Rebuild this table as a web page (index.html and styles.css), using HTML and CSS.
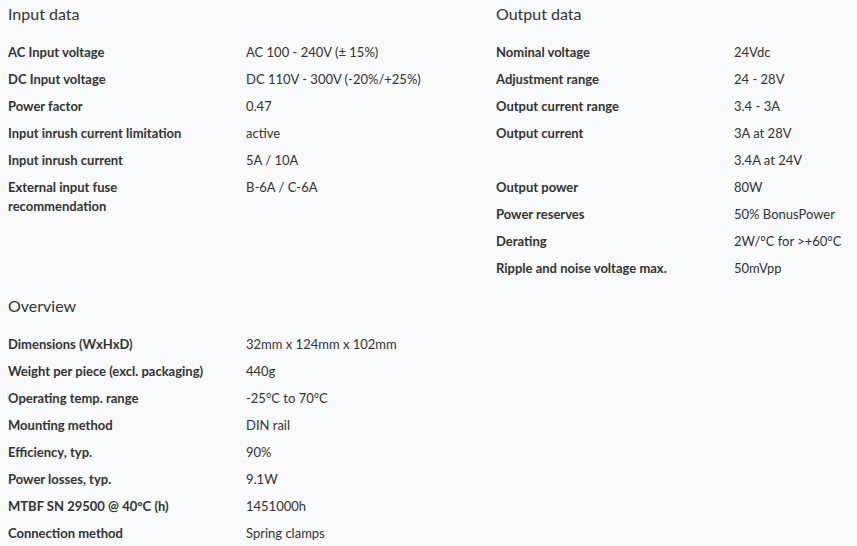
FILE: index.html
```html
<!DOCTYPE html>
<html lang="en">
<head>
<meta charset="utf-8">
<title>Technical data</title>
<link rel="stylesheet" href="styles.css">
</head>
<body>
<div class="page">
  <section class="block">
    <h2 class="block-title">Input data</h2>
    <dl class="specs">
      <dt>AC Input voltage</dt><dd>AC 100 - 240V (± 15%)</dd>
      <dt>DC Input voltage</dt><dd>DC 110V - 300V (-20%/+25%)</dd>
      <dt>Power factor</dt><dd>0.47</dd>
      <dt>Input inrush current limitation</dt><dd>active</dd>
      <dt>Input inrush current</dt><dd>5A / 10A</dd>
      <dt>External input fuse recommendation</dt><dd>B-6A / C-6A</dd>
    </dl>
  </section>
  <section class="block">
    <h2 class="block-title">Output data</h2>
    <dl class="specs">
      <dt>Nominal voltage</dt><dd>24Vdc</dd>
      <dt>Adjustment range</dt><dd>24 - 28V</dd>
      <dt>Output current range</dt><dd>3.4 - 3A</dd>
      <dt>Output current</dt><dd>3A at 28V</dd>
      <dt></dt><dd>3.4A at 24V</dd>
      <dt>Output power</dt><dd>80W</dd>
      <dt>Power reserves</dt><dd>50% BonusPower</dd>
      <dt>Derating</dt><dd>2W/°C for &gt;+60°C</dd>
      <dt>Ripple and noise voltage max.</dt><dd>50mVpp</dd>
    </dl>
  </section>
  <section class="block">
    <h2 class="block-title">Overview</h2>
    <dl class="specs">
      <dt>Dimensions (WxHxD)</dt><dd>32mm x 124mm x 102mm</dd>
      <dt>Weight per piece (excl. packaging)</dt><dd>440g</dd>
      <dt>Operating temp. range</dt><dd>-25°C to 70°C</dd>
      <dt>Mounting method</dt><dd>DIN rail</dd>
      <dt>Efficiency, typ.</dt><dd>90%</dd>
      <dt>Power losses, typ.</dt><dd>9.1W</dd>
      <dt>MTBF SN 29500 @ 40°C (h)</dt><dd>1451000h</dd>
      <dt>Connection method</dt><dd>Spring clamps</dd>
    </dl>
  </section>
</div>
</body>
</html>
```

FILE: styles.css
```css
html, body {
  margin: 0;
  padding: 0;
  background: #f8f9fa;
}

body {
  font-family: Lato, "Open Sans", "Liberation Sans", sans-serif;
  color: #333;
  font-size: 13px;
  overflow: hidden;
}

.page {
  display: grid;
  grid-template-columns: 488px 1fr;
  column-gap: 0;
  row-gap: 13px;
  padding: 3px 8px 0;
}

.block-title {
  margin: 0 0 14px;
  font-size: 16px;
  line-height: 22px;
  font-weight: 400;
  color: #333;
}

.specs {
  display: grid;
  grid-template-columns: 238px 1fr;
  margin: 0;
}

.specs dt,
.specs dd {
  margin: 0;
  padding: 4px 0;
  line-height: 19px;
  min-height: 19px;
}

.specs dt {
  font-weight: 700;
  padding-right: 30px;
}

.specs dd {
  font-weight: 400;
}
```
